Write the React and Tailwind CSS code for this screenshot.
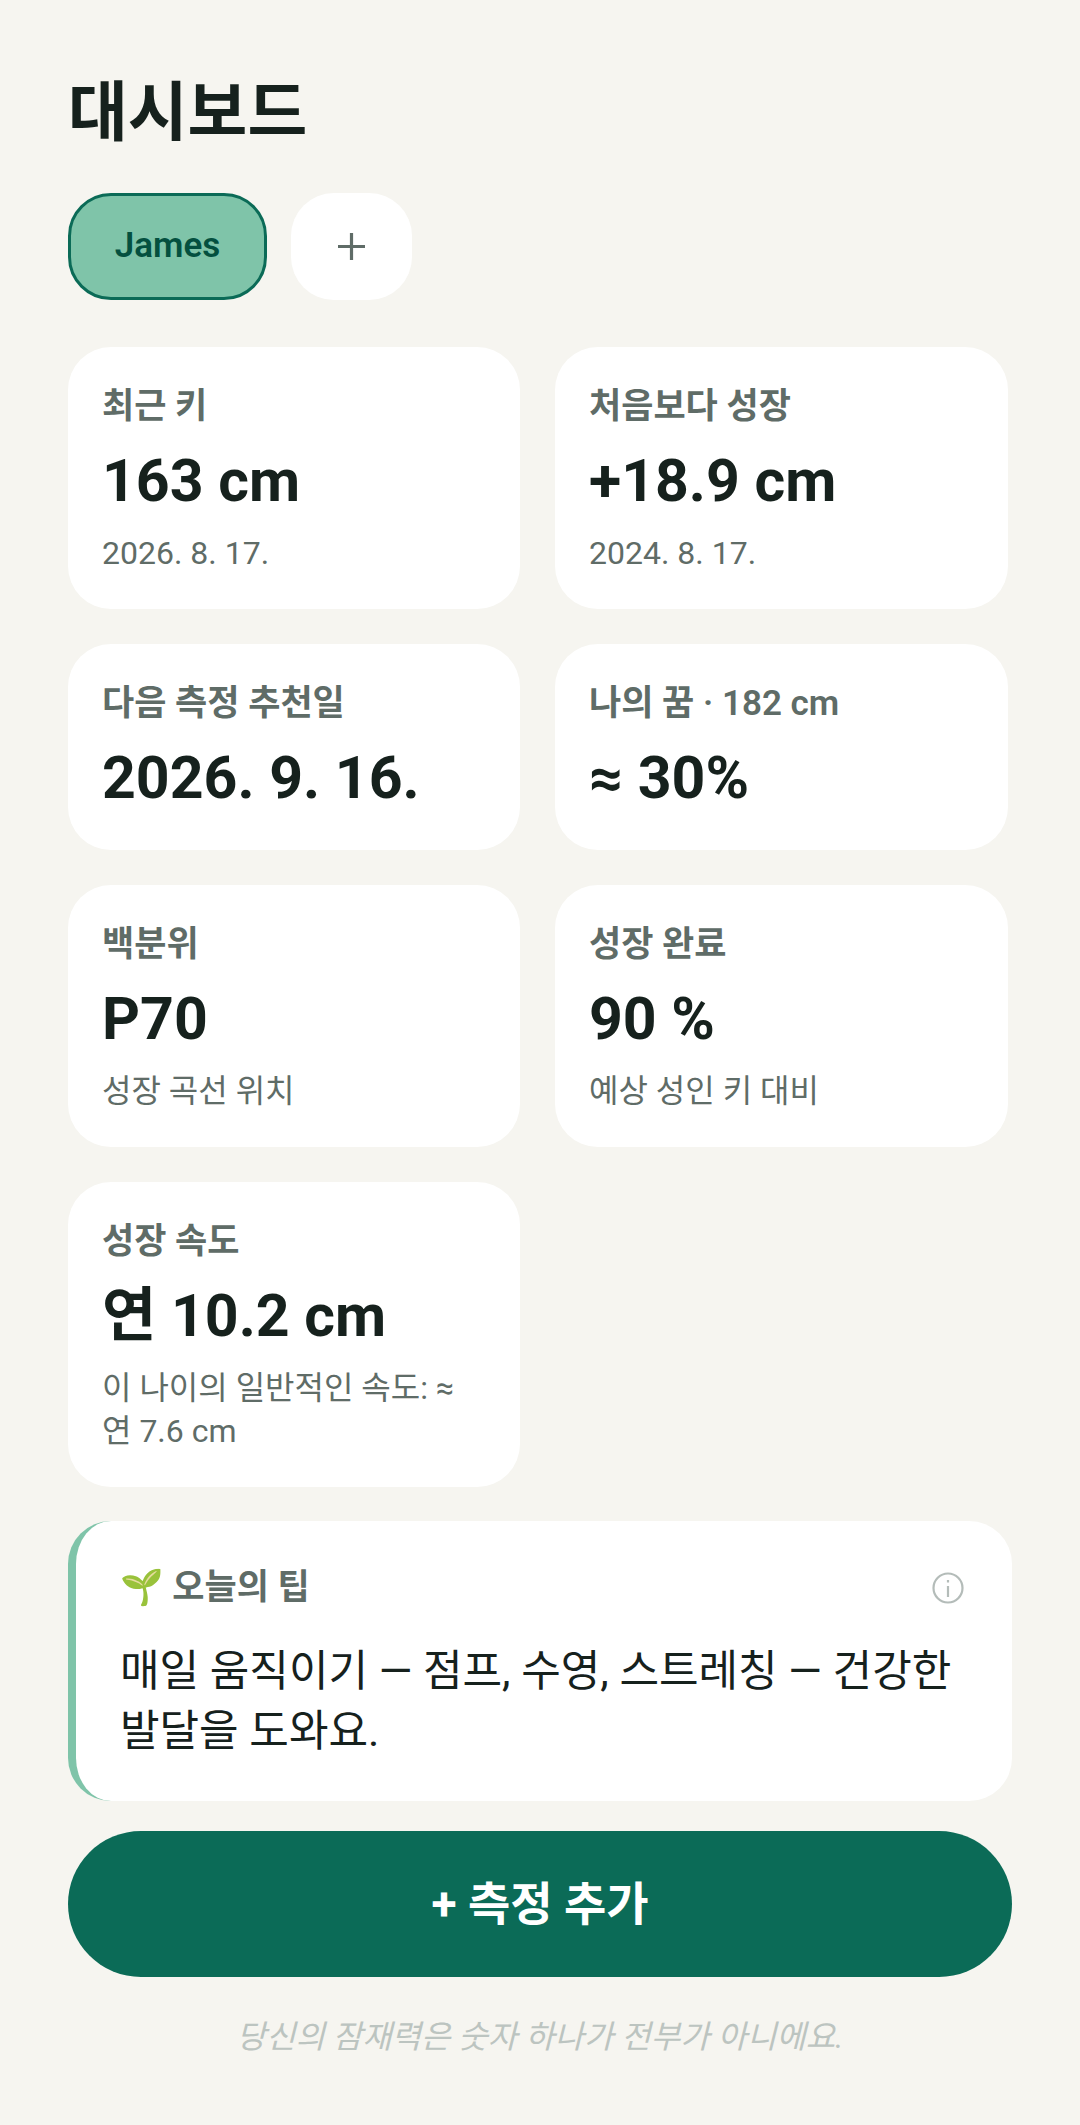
import React from "react";

const font = { fontFamily: '"Roboto","Noto Sans CJK KR","Noto Color Emoji",sans-serif' };

function Card({ label, value, sub }) {
  return (
    <div className="bg-white rounded-[43px] px-[34px] pt-[37px] pb-[34px]">
      <div className="text-[35px] leading-[46px] font-semibold text-[#5f6c67]">{label}</div>
      <div className="text-[59px] leading-[77px] font-bold text-[#16211d] mt-[12px]">{value}</div>
      {sub && <div className="text-[32px] leading-[43px] text-[#5f6c67] mt-[13px]">{sub}</div>}
    </div>
  );
}

export default function App() {
  return (
    <div style={font} className="w-[1080px] h-[2125px] bg-[#f6f5f0] flex flex-col overflow-hidden">
      <div className="h-[1831px] overflow-hidden px-[68px] shrink-0">
        <h1 className="text-[65px] leading-[86px] font-bold text-[#16211d] pt-[70px] h-[193px]">대시보드</h1>
        <div className="flex gap-[24px]">
          <div className="w-[199px] h-[107px] rounded-[43px] bg-[#7fc4a9] border-[3px] border-[#0b6b57] flex items-center justify-center text-[35px] font-semibold text-[#04503f]">James</div>
          <div className="w-[121px] h-[107px] rounded-[43px] bg-white flex items-center justify-center">
            <svg width="27" height="27" viewBox="0 0 27 27" fill="none" stroke="#5f6c67" strokeWidth="3.2">
              <path d="M13.5 0V27M0 13.5H27" />
            </svg>
          </div>
        </div>
        <div className="grid grid-cols-[452px_453px] gap-[35px] mt-[47px] w-[940px] items-start">
          <Card label="최근 키" value="163 cm" sub="2026. 8. 17." />
          <Card label="처음보다 성장" value="+18.9 cm" sub="2024. 8. 17." />
          <Card label="다음 측정 추천일" value="2026. 9. 16." />
          <Card label="나의 꿈 · 182 cm" value="≈ 30%" />
          <Card label="백분위" value="P70" sub="성장 곡선 위치" />
          <Card label="성장 완료" value="90 %" sub="예상 성인 키 대비" />
          <Card label="성장 속도" value="연 10.2 cm" sub="이 나이의 일반적인 속도: ≈ 연 7.6 cm" />
        </div>
        <div className="mt-[34px] bg-white rounded-[43px] border-l-[8px] border-[#7fc4a9] pl-[44px] pr-[48px] pt-[44px] pb-[40px]">
          <div className="flex items-center justify-between">
            <div className="text-[35px] leading-[46px] font-semibold text-[#5f6c67]">🌱 오늘의 팁</div>
            <svg width="32" height="32" viewBox="0 0 32 32" fill="none" stroke="#b4bcb9" strokeWidth="2.2">
              <circle cx="16" cy="16" r="14.5" />
              <path d="M16 14V25M16 8V10.5" />
            </svg>
          </div>
          <div className="text-[43px] leading-[60px] text-[#16211d] mt-[30px]">매일 움직이기 — 점프, 수영, 스트레칭 — 건강한 발달을 도와요.</div>
        </div>
      </div>
      <div className="mx-[68px] h-[146px] shrink-0 rounded-[73px] bg-[#0b6b57] flex items-center justify-center text-white text-[46px] font-bold">+ 측정 추가</div>
      <div className="mt-[38px] text-center text-[32px] leading-[44px] italic text-[#bcc4c0]">당신의 잠재력은 숫자 하나가 전부가 아니에요.</div>
    </div>
  );
}
